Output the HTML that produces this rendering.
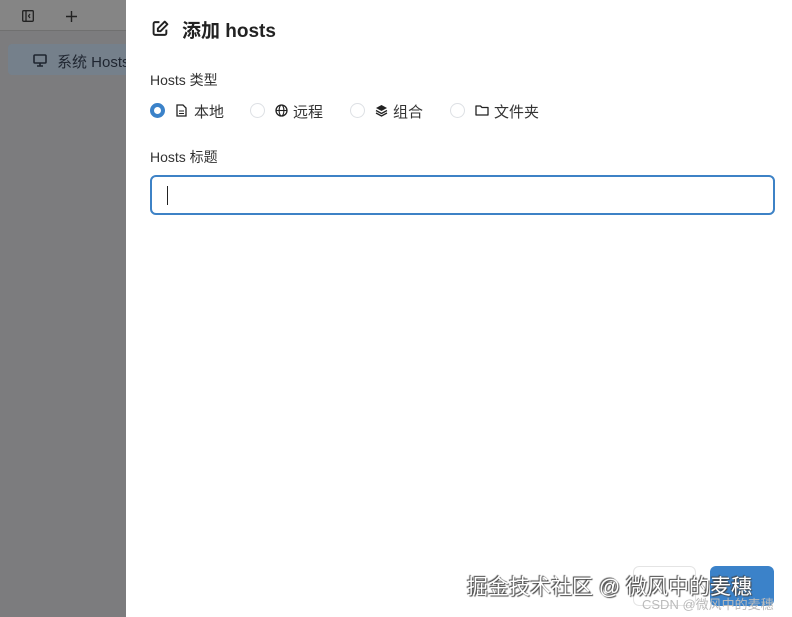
<!DOCTYPE html>
<html><head><meta charset="utf-8"><style>
*{margin:0;padding:0;box-sizing:border-box}
body{width:792px;height:617px;overflow:hidden;position:relative;font-family:"Liberation Sans","Noto Sans CJK SC",sans-serif;background:#7c7c7e}
.hdr{position:absolute;left:0;top:0;width:126px;height:31px;background:#858585;border-bottom:1px solid #707070}
.sel{position:absolute;left:8px;top:44px;width:130px;height:31px;background:#75808b;border-radius:4px}
.sel span{position:absolute;left:49px;top:7px;font-size:15px;color:#1f2530;white-space:nowrap}
.panel{position:absolute;left:126px;top:0;width:666px;height:617px;background:#fff;color:#222}
.t{position:absolute;left:56px;top:16px;font-size:19px;font-weight:bold;color:#222}
.lbl{position:absolute;left:24px;font-size:14px;color:#333}
.radio{position:absolute;top:103px;width:15px;height:15px;border-radius:50%;border:1px solid #dde0e4}
.on{border:4px solid #3b82c9;background:#fff}
.rt{position:absolute;top:101px;font-size:15px;color:#333;white-space:nowrap}
.inp{position:absolute;left:24px;top:175px;width:625px;height:40px;border:2px solid #3d82c6;border-radius:6px}
.inp i{position:absolute;left:15px;top:9px;width:1px;height:19px;background:#222}
.b1{position:absolute;left:507px;top:566px;width:63px;height:40px;border:1px solid #e4e4e4;border-radius:6px;background:#fff}
.b2{position:absolute;left:584px;top:566px;width:64px;height:40px;background:#3b82c9;border-radius:6px}
.wm{position:absolute;left:341px;top:571px;font-size:21px;color:#fff;text-shadow:1px 1px 1px #444,-1px -1px 1px #444;white-space:nowrap}
.wm2{position:absolute;left:516px;top:594px;font-size:13px;color:#bbb;white-space:nowrap}
</style></head><body>
<div class="hdr">
<svg style="position:absolute;left:22px;top:10px" width="12" height="12" viewBox="0 0 12 12"><rect x="0.7" y="0.7" width="10.6" height="10.6" rx="1" fill="none" stroke="#222" stroke-width="1.3"/><line x1="4" y1="1" x2="4" y2="11" stroke="#222" stroke-width="1.3"/><path d="M8 4L6.5 6 8 8" fill="none" stroke="#222" stroke-width="1.2"/></svg>
<svg style="position:absolute;left:66px;top:11px" width="11" height="11"><path d="M5.5 0V11M0 5.5H11" stroke="#222" stroke-width="1.4"/></svg>
</div>
<div class="sel"><svg style="position:absolute;left:25px;top:10px" width="14" height="13"><rect x="1" y="1" width="12" height="8" rx="1" fill="none" stroke="#1f2530" stroke-width="1.6"/><path d="M4 12H10M7 9V12" stroke="#1f2530" stroke-width="1.6"/></svg><span>系统 Hosts</span></div>
<div class="panel">
<svg style="position:absolute;left:26px;top:20px" width="17" height="17" viewBox="0 0 16 16"><path d="M7 2H3a1.5 1.5 0 0 0-1.5 1.5v9A1.5 1.5 0 0 0 3 14h9a1.5 1.5 0 0 0 1.5-1.5V9" fill="none" stroke="#222" stroke-width="1.8"/><path d="M12 1.5l2.5 2.5L8 10.5H5.5V8z" fill="none" stroke="#222" stroke-width="1.8" stroke-linejoin="round"/></svg>
<div class="t">添加 hosts</div>
<div class="lbl" style="top:70px">Hosts 类型</div>
<div class="radio on" style="left:24px"></div>
<svg style="position:absolute;left:50px;top:104px" width="11" height="13"><path d="M1 1H7L10 4V12H1Z" fill="none" stroke="#222" stroke-width="1.3"/><path d="M3 7H8M3 9.5H8" stroke="#222" stroke-width="1.1"/></svg>
<div class="rt" style="left:68px">本地</div>
<div class="radio" style="left:124px"></div>
<svg style="position:absolute;left:149px;top:104px" width="13" height="13"><circle cx="6.5" cy="6.5" r="5.5" fill="none" stroke="#222" stroke-width="1.3"/><ellipse cx="6.5" cy="6.5" rx="2.4" ry="5.5" fill="none" stroke="#222" stroke-width="1.1"/><path d="M1 6.5H12" stroke="#222" stroke-width="1.1"/></svg>
<div class="rt" style="left:167px">远程</div>
<div class="radio" style="left:224px"></div>
<svg style="position:absolute;left:249px;top:104px" width="13" height="13"><path d="M6.5 1L12 4 6.5 7 1 4Z" fill="#222"/><path d="M1 6.5L6.5 9.5 12 6.5M1 9L6.5 12 12 9" fill="none" stroke="#222" stroke-width="1.3"/></svg>
<div class="rt" style="left:267px">组合</div>
<div class="radio" style="left:324px"></div>
<svg style="position:absolute;left:349px;top:104px" width="14" height="12"><path d="M1 2H5.5L7 3.5H13V11H1Z" fill="none" stroke="#222" stroke-width="1.3" stroke-linejoin="round"/></svg>
<div class="rt" style="left:368px">文件夹</div>
<div class="lbl" style="top:147px">Hosts 标题</div>
<div class="inp"><i></i></div>
<div class="b1"></div><div class="b2"></div>
<div class="wm">掘金技术社区 @ 微风中的麦穗</div>
<div class="wm2">CSDN @微风中的麦穗</div>
</div>
</body></html>
